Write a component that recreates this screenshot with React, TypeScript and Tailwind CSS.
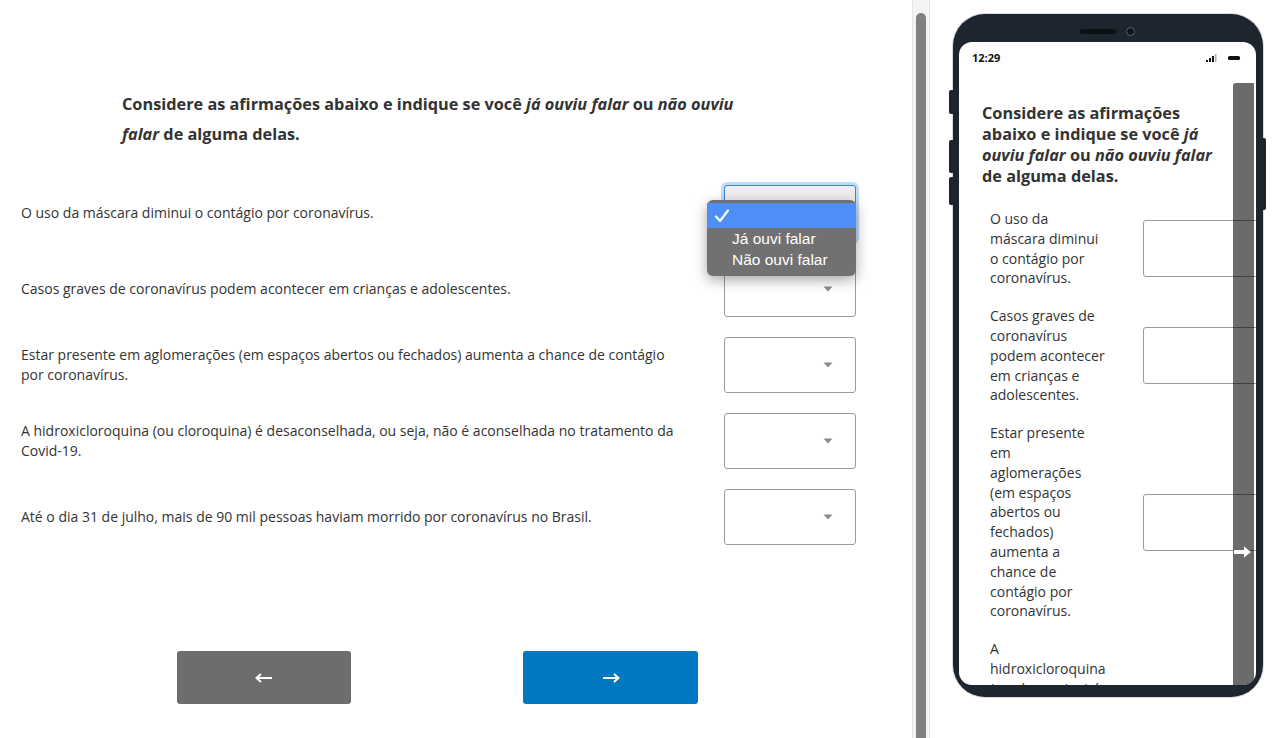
import React from "react";

const questions = [
  "O uso da máscara diminui o contágio por coronavírus.",
  "Casos graves de coronavírus podem acontecer em crianças e adolescentes.",
  "Estar presente em aglomerações (em espaços abertos ou fechados) aumenta a chance de contágio por coronavírus.",
  "A hidroxicloroquina (ou cloroquina) é desaconselhada, ou seja, não é aconselhada no tratamento da Covid-19.",
  "Até o dia 31 de julho, mais de 90 mil pessoas haviam morrido por coronavírus no Brasil.",
];

function Caret() {
  return (
    <svg width="10" height="6" viewBox="0 0 10 6" className="absolute right-[22px] top-1/2 -translate-y-1/2">
      <path d="M0.5 0.5 L9.5 0.5 L5 5.5 Z" fill="#8c8c8c" />
    </svg>
  );
}

function Heading() {
  return (
    <>
      Considere as afirmações abaixo e indique se você <em>já ouviu falar</em> ou{" "}
      <em>não ouviu falar</em> de alguma delas.
    </>
  );
}

export default function App() {
  return (
    <div className="flex h-[738px] w-[1280px] overflow-hidden bg-white font-['Open_Sans',sans-serif] text-[#333]">
      {/* Left panel */}
      <div className="relative flex w-[912px] shrink-0 flex-col pt-[89px]">
        <h1 className="ml-[122px] w-[640px] text-[16.3px] font-bold leading-[30px] text-[#333]">
          <Heading />
        </h1>

        <div className="mt-[36px] flex flex-col gap-5">
          {questions.map((q, i) => (
            <div key={i} className="flex h-[56px] items-center">
              <p className="ml-[21px] w-[660px] text-[14px] leading-[19.8px]">{q}</p>
              <div
                className={
                  i === 0
                    ? "relative ml-[43px] h-[56px] w-[132px] rounded-[3px] border border-[#3f83d8] bg-[#eeeef1] shadow-[0_0_0_3px_rgba(90,150,230,0.35)]"
                    : "relative ml-[43px] h-[56px] w-[132px] rounded-[3px] border border-[#9b9b9b] bg-white"
                }
              >
                {i !== 0 && <Caret />}
              </div>
            </div>
          ))}
        </div>

        <div className="mt-[106px] flex">
          <button className="ml-[177px] flex h-[53px] w-[174px] items-center justify-center rounded-[3px] bg-[#6d6d6d]">
            <svg width="18" height="10" viewBox="0 0 18 10">
              <path d="M17 5 H3" stroke="white" strokeWidth="2" />
              <path d="M6 1 L1.5 5 L6 9" stroke="white" strokeWidth="2" fill="none" />
            </svg>
          </button>
          <button className="ml-[172px] flex h-[53px] w-[175px] items-center justify-center rounded-[3px] bg-[#0079c2]">
            <svg width="18" height="10" viewBox="0 0 18 10">
              <path d="M1 5 H15" stroke="white" strokeWidth="2" />
              <path d="M12 1 L16.5 5 L12 9" stroke="white" strokeWidth="2" fill="none" />
            </svg>
          </button>
        </div>

        {/* open popup menu */}
        <div className="absolute left-[707px] top-[200px] w-[149px] rounded-[6px] bg-[#717171] pb-[6px] pt-[3px] font-['Liberation_Sans',Arial,sans-serif] text-[15.5px] text-white shadow-[0_4px_14px_rgba(0,0,0,0.35)]">
          <div className="flex h-[25px] items-center bg-[#4d8ff6] pl-[7px]">
            <svg width="16" height="14" viewBox="0 0 16 14">
              <path d="M2 7.5 L6 12 L14 1.5" stroke="white" strokeWidth="2.2" fill="none" strokeLinecap="round" strokeLinejoin="round" />
            </svg>
          </div>
          <div className="flex h-[21px] items-center pl-[25px]">Já ouvi falar</div>
          <div className="flex h-[21px] items-center pl-[25px]">Não ouvi falar</div>
        </div>
      </div>

      {/* Scrollbar */}
      <div className="flex h-full w-[18px] shrink-0 justify-center border-x border-[#e6e6e6] bg-[#f3f3f3] pt-[13px]">
        <div className="h-[760px] w-[10px] rounded-full bg-[#808080]" />
      </div>

      {/* Phone */}
      <div className="flex-1 pl-[23px] pt-[14px]">
        <div className="relative h-[683px] w-[310px] rounded-[32px] bg-[#1f252e] pb-[12px] pl-[6px] pr-[7px] pt-[28px] shadow-[0_0_0_1px_#d9dbde]">
          {/* side buttons */}
          <div className="absolute left-[-4px] top-[76px] h-[24px] w-[4px] rounded-l-[2px] bg-[#1f252e]" />
          <div className="absolute left-[-4px] top-[126px] h-[33px] w-[4px] rounded-l-[2px] bg-[#1f252e]" />
          <div className="absolute left-[-4px] top-[163px] h-[28px] w-[4px] rounded-l-[2px] bg-[#1f252e]" />
          <div className="absolute right-[-3px] top-[124px] h-[72px] w-[3px] rounded-r-[2px] bg-[#1f252e]" />
          {/* speaker & camera */}
          <div className="absolute left-[127px] top-[15px] h-[5px] w-[36px] rounded-full bg-[#0d1014]" />
          <div className="absolute left-[173px] top-[13px] h-[9px] w-[9px] rounded-full border-[1.5px] border-[#5a6068] bg-[#111418]" />

          <div className="relative h-full w-full overflow-hidden rounded-[13px] bg-white">
            <div className="flex h-[32px] items-center justify-between pl-[13px] pr-[16px]">
              <span className="text-[11px] font-bold text-[#111]">12:29</span>
              <div className="flex items-center gap-[11px]">
                <svg width="11" height="8" viewBox="0 0 11 8">
                  <rect x="0" y="6" width="2" height="2" fill="#111" />
                  <rect x="3" y="4" width="2" height="4" fill="#111" />
                  <rect x="6" y="2" width="2" height="6" fill="#111" />
                  <rect x="9" y="0" width="1.5" height="8" fill="#aaa" />
                </svg>
                <div className="h-[4px] w-[12px] rounded-[1.5px] bg-[#111]" />
              </div>
            </div>

            <h2 className="ml-[23px] mt-[29px] w-[238px] text-[16.3px] font-bold leading-[21px] text-[#333]">
              <Heading />
            </h2>

            <div className="mt-[22px] flex flex-col gap-[18px]">
              {questions.map((q, i) => (
                <div key={i} className="flex items-center">
                  <p className="ml-[31px] w-[115.5px] shrink-0 text-[14px] leading-[19.8px]">{q}</p>
                  <div className="ml-[37.5px] h-[57px] w-[132px] shrink-0 rounded-[3px] border border-[#9b9b9b] bg-white" />
                </div>
              ))}
            </div>

            {/* overlay bar */}
            <div className="absolute bottom-0 left-[274px] top-[41px] w-[21px] rounded-tl-[3px] bg-black/[0.58]">
              <svg width="18" height="12" viewBox="0 0 18 12" className="absolute left-[1px] top-[463px]">
                <path d="M0 4 H10 V0.5 L17 6 L10 11.5 V8 H0 Z" fill="white" />
              </svg>
            </div>
          </div>
        </div>
      </div>
    </div>
  );
}
